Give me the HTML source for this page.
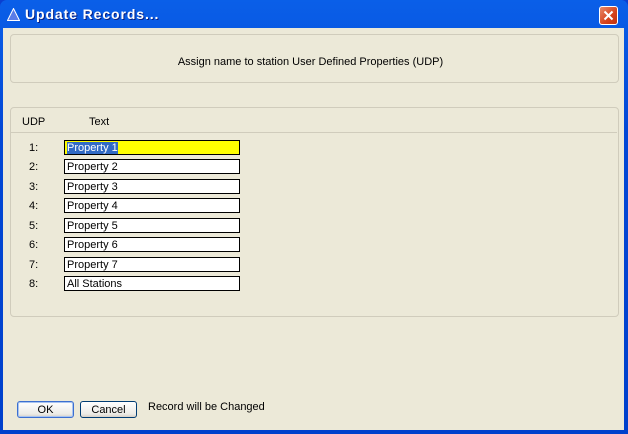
<!DOCTYPE html>
<html><head><style>
body{margin:0;width:628px;height:434px;overflow:hidden;background:#0a3fd0;font-family:"Liberation Sans",sans-serif;font-size:11px;color:#000}
.win{position:absolute;left:0;top:0;width:628px;height:434px;background:linear-gradient(#0a5fe8,#0348d6 30%,#0040cc);border-radius:7px 7px 0 0}
.title{position:absolute;left:25px;top:6px;color:#fff;font-weight:bold;font-size:14px;letter-spacing:0.9px;text-shadow:1px 1px #0a1f80}
.client{position:absolute;left:3px;top:28px;width:621px;height:402px;background:#ECE9D8}
.close{position:absolute;left:599px;top:6px;width:19px;height:19px;background:linear-gradient(135deg,#e88a6a,#d5421c 60%,#c03010);border:1px solid #fff;border-radius:3px;box-sizing:border-box}
.grp{position:absolute;border:1px solid #d0ccbc;border-radius:4px}
.lbl{position:absolute}
.in{position:absolute;left:61px;width:176px;height:15px;border:1px solid #000;background:#fff;box-sizing:border-box;padding-left:2px;padding-top:1px;line-height:13px;font-size:11px}
.btn{position:absolute;top:373px;height:17px;width:57px;border:1px solid #003c74;border-radius:3px;background:linear-gradient(#fff,#ecebe6 80%,#d6d0c5);box-sizing:border-box;text-align:center;line-height:16px}
</style></head><body>
<div class="win">
<svg style="position:absolute;left:7px;top:8px" width="13" height="13"><polygon points="6.5,0.5 12.5,12.5 0.5,12.5" fill="#5a7ce8" stroke="#fff" stroke-width="1"/></svg>
<div class="title">Update Records...</div>
<div class="close"><svg width="17" height="17"><path d="M4.5 4.5L12.5 12.5M12.5 4.5L4.5 12.5" stroke="#fff" stroke-width="2"/></svg></div>
<div class="client">
<div class="grp" style="left:7px;top:6px;width:607px;height:47px"></div>
<div class="lbl" style="left:0;width:615px;top:28px;text-align:center">Assign name to station User Defined Properties (UDP)</div>
<div class="grp" style="left:7px;top:79px;width:607px;height:208px"></div>
<div style="position:absolute;left:8px;top:104px;width:606px;border-top:1px solid #d0ccbc"></div>
<div class="lbl" style="left:19px;top:88px">UDP</div>
<div class="lbl" style="left:86px;top:88px">Text</div>
<div class="lbl" style="left:26px;top:114px">1:</div>
<div class="in" style="top:112px;background:#ff0"><span style="background:#316ac5;color:#fff">Property 1</span></div>
<div class="lbl" style="left:26px;top:133px">2:</div><div class="in" style="top:131px">Property 2</div>
<div class="lbl" style="left:26px;top:153px">3:</div><div class="in" style="top:151px">Property 3</div>
<div class="lbl" style="left:26px;top:172px">4:</div><div class="in" style="top:170px">Property 4</div>
<div class="lbl" style="left:26px;top:192px">5:</div><div class="in" style="top:190px">Property 5</div>
<div class="lbl" style="left:26px;top:211px">6:</div><div class="in" style="top:209px">Property 6</div>
<div class="lbl" style="left:26px;top:231px">7:</div><div class="in" style="top:229px">Property 7</div>
<div class="lbl" style="left:26px;top:250px">8:</div><div class="in" style="top:248px">All Stations</div>
<div class="btn" style="left:14px;border-color:#3c6fd0;box-shadow:inset 0 0 0 1px #a8c4f0">OK</div>
<div class="btn" style="left:77px">Cancel</div>
<div class="lbl" style="left:145px;top:373px">Record will be Changed</div>
</div></div>
</body></html>
